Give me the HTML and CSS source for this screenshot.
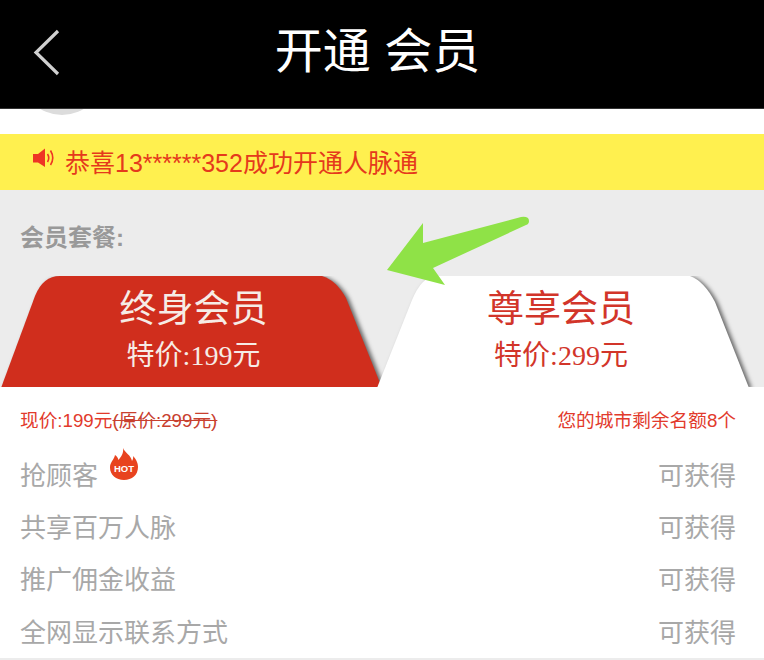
FILE: index.html
```html
<!DOCTYPE html>
<html lang="zh-CN">
<head>
<meta charset="utf-8">
<title>开通会员</title>
<link rel="stylesheet" href="styles.css">
</head>
<body>
<div class="page">
  <header class="topbar">
    <svg class="back" width="30" height="50" viewBox="0 0 30 50"><path d="M25 2 L3 23.500 L25 45" fill="none" stroke="#d0d0d0" stroke-width="3.200"/></svg>
    <h1 class="title">开通 会员</h1>
  </header>
  <div class="strip"><div class="avatar"></div></div>
  <div class="notice">
    <svg class="speaker" width="24" height="24" viewBox="0 0 24 24">
      <path d="M1 7 H6 L13 1.500 V20 L6 15.500 H1 Z" fill="#ee3524"/>
      <path d="M15.500 7 Q18 11 15.500 15" fill="none" stroke="#ee3524" stroke-width="1.600"/>
      <path d="M18.500 3.500 Q23 11 18.500 18" fill="none" stroke="#ee3524" stroke-width="1.600"/>
    </svg>
    <span>恭喜13******352成功开通人脉通</span>
  </div>
  <section class="plans">
    <svg class="arrow" width="150" height="80" viewBox="0 0 150 80"><path d="M7 60 L43 13 L43 33 L141 7 Q149 6 149 11 Q149 14 146 15 L53 58 L65 75 Z" fill="#8fe247"/></svg>
    <div class="plans-label">会员套餐:</div>
    <div class="tabs">
      <div class="tab tab-on">
        <svg class="tab-bg" width="390" height="111" viewBox="0 0 390 111"><path d="M1 112 L35 20 Q43 0 60 0 L322 0 Q336 4 346 22 L382 112 Z" fill="#d02e1d"/></svg>
        <div class="tab-name">终身会员</div>
        <div class="tab-price">特价:199元</div>
      </div>
      <div class="tab tab-off">
        <svg class="tab-bg" width="380" height="111" viewBox="0 0 380 111"><path d="M1 112 L36 24 Q46 0 60 0 L314 0 Q328 5 339 26 L373 112 Z" fill="#fff"/></svg>
        <div class="tab-name">尊享会员</div>
        <div class="tab-price">特价:299元</div>
      </div>
    </div>
  </section>
  <section class="details">
    <div class="price-row">
      <span>现价:199元<s>(原价:299元)</s></span>
      <span>您的城市剩余名额8个</span>
    </div>
    <div class="row">
      <span class="row-name">抢顾客
        <span class="hot">
          <svg width="30" height="34" viewBox="0 0 30 34"><path d="M14 1 C16 6 22 8 23 14 C24 12 24.500 11 24 9 C28 13 29 17 29 20 C29 28 23 33 15 33 C7 33 1 28 1 20.500 C1 15 5 13 6 8 C8 9 9 11 9.500 13 C12 10 15 6 14 1 Z" fill="#e8431f"/></svg>
          <b class="hot-text">HOT</b>
        </span>
      </span>
      <span class="row-value">可获得</span>
    </div>
    <div class="row"><span class="row-name">共享百万人脉</span><span class="row-value">可获得</span></div>
    <div class="row"><span class="row-name">推广佣金收益</span><span class="row-value">可获得</span></div>
    <div class="row"><span class="row-name">全网显示联系方式</span><span class="row-value">可获得</span></div>
  </section>
</div>
</body>
</html>
```
FILE: styles.css
```css
* { box-sizing: border-box; }
html, body { margin: 0; padding: 0; }
body {
  font-family: "Liberation Sans", "Noto Sans CJK SC", sans-serif;
  background: #fff;
}
.page { width: 764px; height: 660px; overflow: hidden; display: flex; flex-direction: column; }

.topbar {
  height: 109px;
  flex: none;
  background: #000;
  border-bottom: 1px solid #333;
  display: flex;
  align-items: center;
  justify-content: center;
  position: relative;
}
.back { position: absolute; left: 33px; top: 29px; }
.title { margin: 0 9px 5px 0; color: #fff; font-size: 48px; font-weight: 400; line-height: 60px; }

.strip { height: 25px; flex: none; overflow: hidden; background: #fff; }
.avatar { width: 84px; height: 84px; margin: -78px 0 0 20px; border-radius: 50%; background: #dcdcdc; }

.notice {
  height: 56px;
  flex: none;
  background: #fff04f;
  color: #e5391c;
  font-size: 25px;
  display: flex;
  align-items: center;
  padding: 0 0 2px 32px;
  gap: 9px;
}
.speaker { margin-top: -5px; }

.plans {
  height: 197px;
  flex: none;
  background: #ececec;
  position: relative;
  display: flex;
  flex-direction: column;
  justify-content: space-between;
}
.arrow { position: absolute; left: 380px; top: 20px; z-index: 2; }
.plans-label { margin: 33px 0 0 20px; color: #999; font-size: 24px; font-weight: 700; line-height: 30px; }

.tabs { display: flex; height: 111px; overflow: hidden; padding-right: 14px; }
.tab {
  position: relative;
  flex: none;
  height: 111px;
  text-align: center;
  padding-top: 11px;
}
.tab-on { width: 376px; padding-left: 11px; color: #f6ece6; }
.tab-off { width: 374px; padding-right: 4px; color: #d2352a; }
.tab-bg { position: absolute; left: 0; top: 0; overflow: visible; filter: drop-shadow(3px 1px 2px #666); }
.tab-name, .tab-price { position: relative; }
.tab-name { font-size: 37px; line-height: 46px; }
.tab-price { font-family: "Liberation Serif", "Noto Sans CJK SC", serif; font-size: 28px; line-height: 45px; }

.details { flex: 1; background: #fff; padding: 15px 28px 0 20px; border-bottom: 2px solid #ececec; }
.price-row {
  display: flex;
  justify-content: space-between;
  align-items: center;
  height: 32px;
  margin-bottom: 13px;
  color: #e23a2c;
  font-size: 18.700px;
}
.price-row s { color: #c8402f; }
.row {
  display: flex;
  justify-content: space-between;
  align-items: center;
  height: 52.300px;
  color: #a8a8a8;
  font-size: 26px;
}
.row-name { display: flex; align-items: center; }
.hot { position: relative; width: 30px; height: 34px; margin: -18px 0 0 11px; }
.hot svg { display: block; }
.hot-text {
  position: absolute;
  left: 0;
  right: 0;
  top: 16px;
  text-align: center;
  color: #fff;
  font-size: 9.500px;
  line-height: 12px;
}
```
